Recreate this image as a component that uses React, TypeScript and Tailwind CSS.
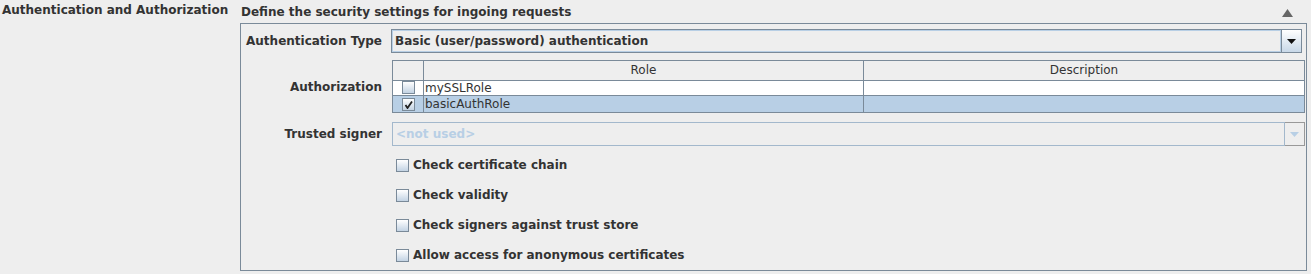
import React from "react";

const font = "font-['DejaVu_Sans',_'Liberation_Sans',_sans-serif]";

function CheckBox({ checked = false }: { checked?: boolean }) {
  return (
    <div className="flex h-[13px] w-[13px] shrink-0 items-center justify-center border border-[#7a8a99] bg-linear-to-b from-[#ffffff] to-[#c3d3e3]">
      {checked && (
        <svg width="9" height="9" viewBox="0 0 9 9">
          <path d="M1.5 5 L3.5 8 L8 1.5" stroke="#222" strokeWidth="1.8" fill="none" />
        </svg>
      )}
    </div>
  );
}

function Caret({ color }: { color: string }) {
  return (
    <svg width="9" height="5" viewBox="0 0 9 5">
      <polygon points="0,0 9,0 4.5,5" fill={color} />
    </svg>
  );
}

const roles = [
  { name: "mySSLRole", checked: false, selected: false },
  { name: "basicAuthRole", checked: true, selected: true },
];

const options = [
  "Check certificate chain",
  "Check validity",
  "Check signers against trust store",
  "Allow access for anonymous certificates",
];

export default function App() {
  return (
    <div className={`flex h-[274px] w-[1311px] bg-[#eeeeee] text-[12px] text-[#333333] ${font}`}>
      <div className="w-[240px] shrink-0 pl-[2px] pt-[1px] font-bold">Authentication and Authorization</div>

      <div className="flex w-[1067px] flex-col">
        <div className="flex h-[23px] items-center justify-between pl-[1px] pr-[14px] font-bold">
          <span className="mt-[1px]">Define the security settings for ingoing requests</span>
          <svg width="11" height="8" viewBox="0 0 11 8" className="mt-[3px]">
            <polygon points="5.5,0 11,8 0,8" fill="#666666" />
          </svg>
        </div>

        <div className="flex h-[248px] flex-col border border-[#7a8a99] pl-[4px] pr-[1px] pt-[5px]">
          <div className="flex h-[24px] items-center">
            <div className="w-[146px] shrink-0 pr-[9px] text-right font-bold">Authentication Type</div>
            <div className="flex h-[24px] w-[911px] border border-[#7a8a99]">
              <div className="flex flex-1 items-center border border-[#b8cfe5] pl-[2px] font-bold">
                Basic (user/password) authentication
              </div>
              <div className="flex w-[20px] items-center justify-center border-l border-[#7a8a99] bg-linear-to-b from-[#ffffff] to-[#c8d8e8]">
                <Caret color="#111111" />
              </div>
            </div>
          </div>

          <div className="mt-[7px] flex h-[53px] items-center">
            <div className="w-[147px] shrink-0 pr-[10px] text-right font-bold">Authorization</div>
            <div className="flex h-[53px] w-[913px] flex-col border border-[#7a8a99]">
              <div className="flex h-[20px] border-b border-[#7a8a99] bg-[#eeeeee]">
                <div className="w-[31px] border-r border-[#7a8a99]" />
                <div className="flex w-[440px] items-center justify-center border-r border-[#7a8a99]">Role</div>
                <div className="flex flex-1 items-center justify-center">Description</div>
              </div>
              {roles.map((r, i) => (
                <div
                  key={r.name}
                  className={`flex h-[16px] ${i === 0 ? "border-b border-[#7a8a99]" : ""} ${r.selected ? "bg-[#b8cfe5]" : "bg-white"}`}
                >
                  <div className="flex w-[31px] items-center justify-center border-r border-[#7a8a99]">
                    <CheckBox checked={r.checked} />
                  </div>
                  <div className="flex w-[440px] items-center border-r border-[#7a8a99] pl-[1px] leading-none">{r.name}</div>
                  <div className="flex-1" />
                </div>
              ))}
            </div>
          </div>

          <div className="mt-[9px] flex h-[24px] items-center">
            <div className="w-[147px] shrink-0 pr-[10px] text-right font-bold">Trusted signer</div>
            <div className="flex h-[24px] w-[914px]">
              <div className="flex flex-1 items-center border border-[#a3b8cc] pl-[3px] font-bold text-[#b8cfe5]">&lt;not used&gt;</div>
              <div className="flex w-[20px] items-center justify-center border border-l-0 border-[#999999]">
                <Caret color="#b8cfe5" />
              </div>
            </div>
          </div>

          <div className="mt-[4px] flex flex-col pl-[151px]">
            {options.map((o) => (
              <div key={o} className="flex h-[30px] items-center gap-[4px] font-bold">
                <CheckBox />
                <span>{o}</span>
              </div>
            ))}
          </div>
        </div>
      </div>
    </div>
  );
}
